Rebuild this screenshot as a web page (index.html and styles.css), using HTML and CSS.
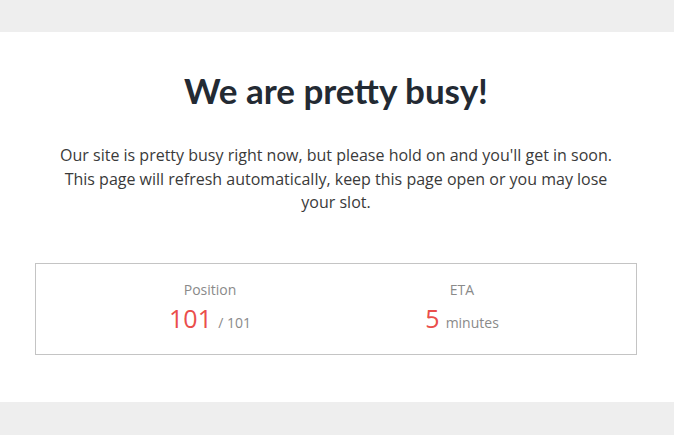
FILE: index.html
```html
<!DOCTYPE html>
<html lang="en">
  <head>
    <meta charset="UTF-8" />
    <meta name="viewport" content="width=device-width, initial-scale=1.0" />
    <title>We are pretty busy!</title>
    <link rel="stylesheet" href="styles.css">
  </head>
  <body>
    <div class="band"></div>

    <!-- Queue notice -->
    <div class="main">
      <h1>We are pretty busy!</h1>
      <p class="lead">
        Our site is pretty busy right now, but please hold on and you'll get in soon.
        This page will refresh automatically, keep this page open or you may lose
        your slot.
      </p>

      <div class="queue-box">
        <div class="queue-row">
          <div class="queue-col">
            <div class="queue-label">Position</div>
            <div class="queue-value"><span class="big">101</span> <span class="small">/ 101</span></div>
          </div>
          <div class="queue-col">
            <div class="queue-label">ETA</div>
            <div class="queue-value"><span class="big">5</span> <span class="small">minutes</span></div>
          </div>
        </div>
      </div>
    </div>

    <div class="band band-bottom"></div>
  </body>
</html>
```

FILE: styles.css
```css
body {
  margin: 0;
  background-color: #eeeeee;
  font-family: "Open Sans", Arial, sans-serif;
  color: #333;
}
.band {
  height: 32px;
}
.band-bottom {
  height: 40px;
}
.main {
  background-color: #fff;
  height: 370px;
  box-sizing: border-box;
  padding: 1px 37px 0 35px;
  text-align: center;
}
h1 {
  font-family: Lato, "Open Sans", sans-serif;
  font-weight: 700;
  font-size: 35px;
  color: #232a33;
  margin: 35px 0 0;
  line-height: 44px;
}
.lead {
  font-size: 16px;
  line-height: 23.5px;
  color: #3a3a3a;
  max-width: 570px;
  margin: 32px auto 0;
}
.queue-box {
  margin-top: 48px;
  border: 1px solid #c4c4c4;
  padding: 16px 48px 13px;
}
.queue-row {
  display: flex;
}
.queue-col {
  flex: 1;
}
.queue-label {
  font-size: 14px;
  color: #8a8a8a;
  line-height: 20px;
}
.queue-value {
  color: #8a8a8a;
  line-height: 36px;
}
.big {
  font-size: 25px;
  color: #ea4e4b;
}
.small {
  font-size: 14px;
  margin-left: 2px;
}
```
